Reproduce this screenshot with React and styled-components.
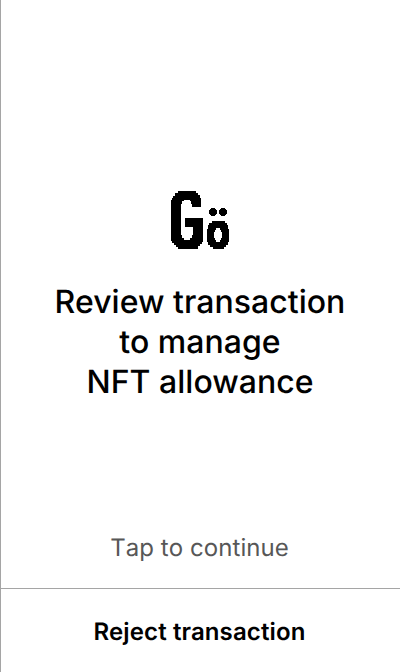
import React from "react";
import styled, { createGlobalStyle } from "styled-components";

const GlobalStyle = createGlobalStyle`
  *, *::before, *::after { box-sizing: border-box; }
  body { margin: 0; background: #fff; }
`;

const Screen = styled.main`
  display: flex;
  flex-direction: column;
  width: 400px;
  height: 672px;
  overflow: hidden;
  background: #fff;
  border-left: 1px solid #a5a5a5;
  color: #000;
  font-family: Inter, "Liberation Sans", sans-serif;
  text-align: center;
  text-rendering: geometricPrecision;
`;

const Content = styled.section`
  flex: 1;
  display: flex;
  flex-direction: column;
  align-items: center;
  padding-top: 184px;
  padding-right: 1px;
`;

const Logo = styled.svg`
  display: block;
  width: 72px;
  height: 70px;
`;

const Title = styled.h1`
  margin: 28px 0 0;
  font-size: 32px;
  line-height: 40px;
  font-weight: 500;
  letter-spacing: 0.03px;
`;

const Hint = styled.p`
  margin: auto 0 24px;
  padding-right: 1px;
  font-size: 24px;
  line-height: 32px;
  font-weight: 400;
  font-kerning: none;
  letter-spacing: 0.06px;
  color: #575757;
`;

const RejectButton = styled.button`
  height: 84px;
  padding: 3px 2px 0 0;
  border: 0;
  border-top: 1px solid #a5a5a5;
  background: #fff;
  color: #000;
  font: 600 24px/32px Inter, "Liberation Sans", sans-serif;
  letter-spacing: 0.12px;
  text-rendering: geometricPrecision;
`;

export default function App() {
  return (
    <>
      <GlobalStyle />
      <Screen>
        <Content>
          <Logo viewBox="0 0 72 70" shapeRendering="crispEdges" aria-label="Gö">
            <path
              fillRule="evenodd"
              d="M14 7H32V9H34V11H36V14H37V23H28V20H27V17H26V16H20V17H18V20H17V51H18V54H20V56H26V54H28V51H29V43H21V34H39V58H38V60H36V62H34V65H14V63H12V61H10V59H8V57H7V16H8V14H9V12H11V9H14Z"
            />
            <path
              fillRule="evenodd"
              d="M48 37H61V39H63V41H64V45H65V58H64V61H62V63H60V65H49V63H46V61H44V58H43V45H44V41H45V39H48ZM52 44V46H51V48H50V54H51V56H52V58H56V56H57V54H58V48H57V46H56V44Z"
            />
            <path d="M47 24H51V25H52V26H53V30H52V31H51V32H47V31H46V30H45V26H46V25H47ZM57 24H61V25H62V26H63V30H62V31H61V32H57V31H56V30H55V26H56V25H57Z" />
          </Logo>
          <Title>
            Review transaction
            <br />
            to manage
            <br />
            NFT allowance
          </Title>
          <Hint>Tap to continue</Hint>
        </Content>
        <RejectButton type="button">Reject transaction</RejectButton>
      </Screen>
    </>
  );
}
